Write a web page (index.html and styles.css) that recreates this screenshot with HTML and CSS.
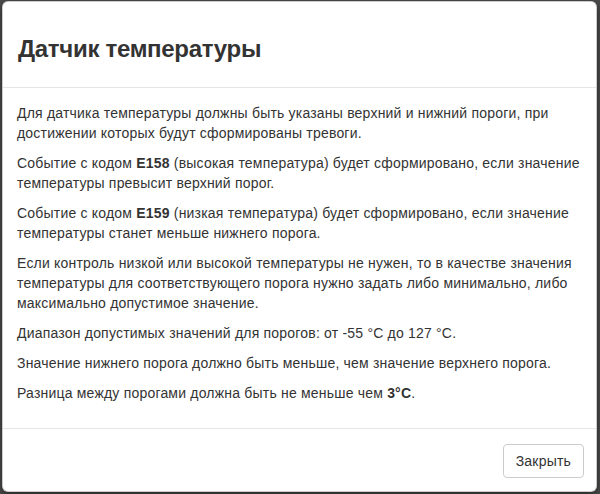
FILE: index.html
```html
<!DOCTYPE html>
<html lang="ru">
    <head>
        <meta charset="UTF-8">
        <meta name="viewport" content="width=device-width, initial-scale=1.0">
        <title>Датчик температуры</title>
        <link rel="stylesheet" href="styles.css">
    </head>
    <body>
        <div class="modal">
            <div class="modal-header">
                <h3 class="modal-title">Датчик температуры</h3>
            </div>
            <div class="modal-body">
                <p>Для датчика температуры должны быть указаны верхний и нижний пороги, при достижении которых будут сформированы тревоги.</p>
                <p>Событие с кодом <b>E158</b> (высокая температура) будет сформировано, если значение температуры превысит верхний порог.</p>
                <p>Событие с кодом <b>E159</b> (низкая температура) будет сформировано, если значение температуры станет меньше нижнего порога.</p>
                <p>Если контроль низкой или высокой температуры не нужен, то в качестве значения температуры для соответствующего порога нужно задать либо минимально, либо максимально допустимое значение.</p>
                <p>Диапазон допустимых значений для порогов: от -55 °C до 127 °C.</p>
                <p>Значение нижнего порога должно быть меньше, чем значение верхнего порога.</p>
                <p>Разница между порогами должна быть не меньше чем <b>3°C</b>.</p>
            </div>
            <div class="modal-footer">
                <button type="button" class="btn">Закрыть</button>
            </div>
        </div>
    </body>
</html>
```

FILE: styles.css
```css
* {
    box-sizing: border-box;
}

body, html {
    height: 100%;
    margin: 0;
}
body {
    background-color: #4b4b4b;
    font-family: "Liberation Sans", Arial, sans-serif;
    font-size: 14px;
    line-height: 20px;
    color: #333;
    padding: 1px 3px 2px 2px;
}
.modal {
    height: 491px;
    display: flex;
    flex-direction: column;
    background-color: #fff;
    border: 1px solid rgba(0, 0, 0, 0.2);
    border-radius: 6px;
    box-shadow: 0 3px 9px rgba(0, 0, 0, 0.5);
}
.modal-header {
    padding: 34px 15px 25px;
    border-bottom: 1px solid #e5e5e5;
}
.modal-title {
    margin: 0;
    font-size: 24px;
    line-height: 26px;
    font-weight: bold;
    letter-spacing: -0.3px;
}
.modal-body {
    flex: 1;
    padding: 15px 14px;
    letter-spacing: 0.2px;
}
.modal-body p {
    margin: 0 0 10px;
}
.modal-footer {
    display: flex;
    justify-content: flex-end;
    padding: 15px 12px 14px;
    border-top: 1px solid #e5e5e5;
}
.btn {
    font-family: inherit;
    font-size: 14px;
    line-height: 20px;
    letter-spacing: 0.2px;
    padding: 6px 12px;
    color: #333;
    background-color: #fff;
    border: 1px solid #ccc;
    border-radius: 4px;
    cursor: pointer;
}
```
